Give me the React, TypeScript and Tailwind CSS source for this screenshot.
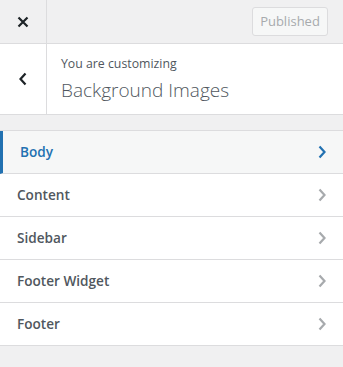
const sections = ["Body", "Content", "Sidebar", "Footer Widget", "Footer"];

function Chevron({ active }: { active?: boolean }) {
  return (
    <svg width="10" height="14" viewBox="0 0 10 14" className="shrink-0">
      <polyline
        points="2.5,1.5 7.5,7 2.5,12.5"
        fill="none"
        stroke={active ? "#2271b1" : "#a7aaad"}
        strokeWidth="2.2"
      />
    </svg>
  );
}

export default function App() {
  return (
    <div
      className="flex h-[367px] w-[343px] flex-col bg-[#f0f0f1] text-[#50575e]"
      style={{ fontFamily: '"Open Sans", "Noto Sans", sans-serif' }}
    >
      <div className="flex h-[44px] border-b border-[#dcdcde]">
        <button className="flex w-[47px] items-center justify-center border-r border-[#dcdcde]">
          <svg width="12" height="12" viewBox="0 0 12 12">
            <path d="M1.5 1.5 L10.5 10.5 M10.5 1.5 L1.5 10.5" stroke="#1d2327" strokeWidth="2.2" />
          </svg>
        </button>
        <div className="flex flex-1 items-center justify-end pr-[15px]">
          <button className="h-[29px] w-[76px] rounded-[3px] border border-[#dcdcde] bg-[#f6f7f7] text-[13px] text-[#a7aaad]">
            Published
          </button>
        </div>
      </div>

      <div className="flex h-[71px] border-b border-[#dcdcde] bg-white">
        <button className="flex w-[47px] items-center justify-center border-r border-[#dcdcde]">
          <svg width="10" height="14" viewBox="0 0 10 14">
            <polyline points="7.5,1.5 2.5,7 7.5,12.5" fill="none" stroke="#1d2327" strokeWidth="2.2" />
          </svg>
        </button>
        <div className="flex flex-col justify-center pl-[14px]">
          <span className="text-[12.3px] leading-[18px]">You are customizing</span>
          <span className="mt-[4px] text-[19px] font-light leading-[26px]">Background Images</span>
        </div>
      </div>

      <ul className="mt-[15px] border-t border-[#dcdcde]">
        {sections.map((name, i) => {
          const active = i === 0;
          return (
            <li
              key={name}
              className={`flex h-[43px] items-center justify-between border-b border-[#dcdcde] pl-[17px] pr-[16px] text-[13.6px] font-semibold ${
                active ? "border-l-[3px] border-l-[#2271b1] bg-[#f6f7f7] pl-[14px] text-[#2271b1]" : "bg-white"
              }`}
            >
              <span>{name}</span>
              <Chevron active={active} />
            </li>
          );
        })}
      </ul>
    </div>
  );
}
